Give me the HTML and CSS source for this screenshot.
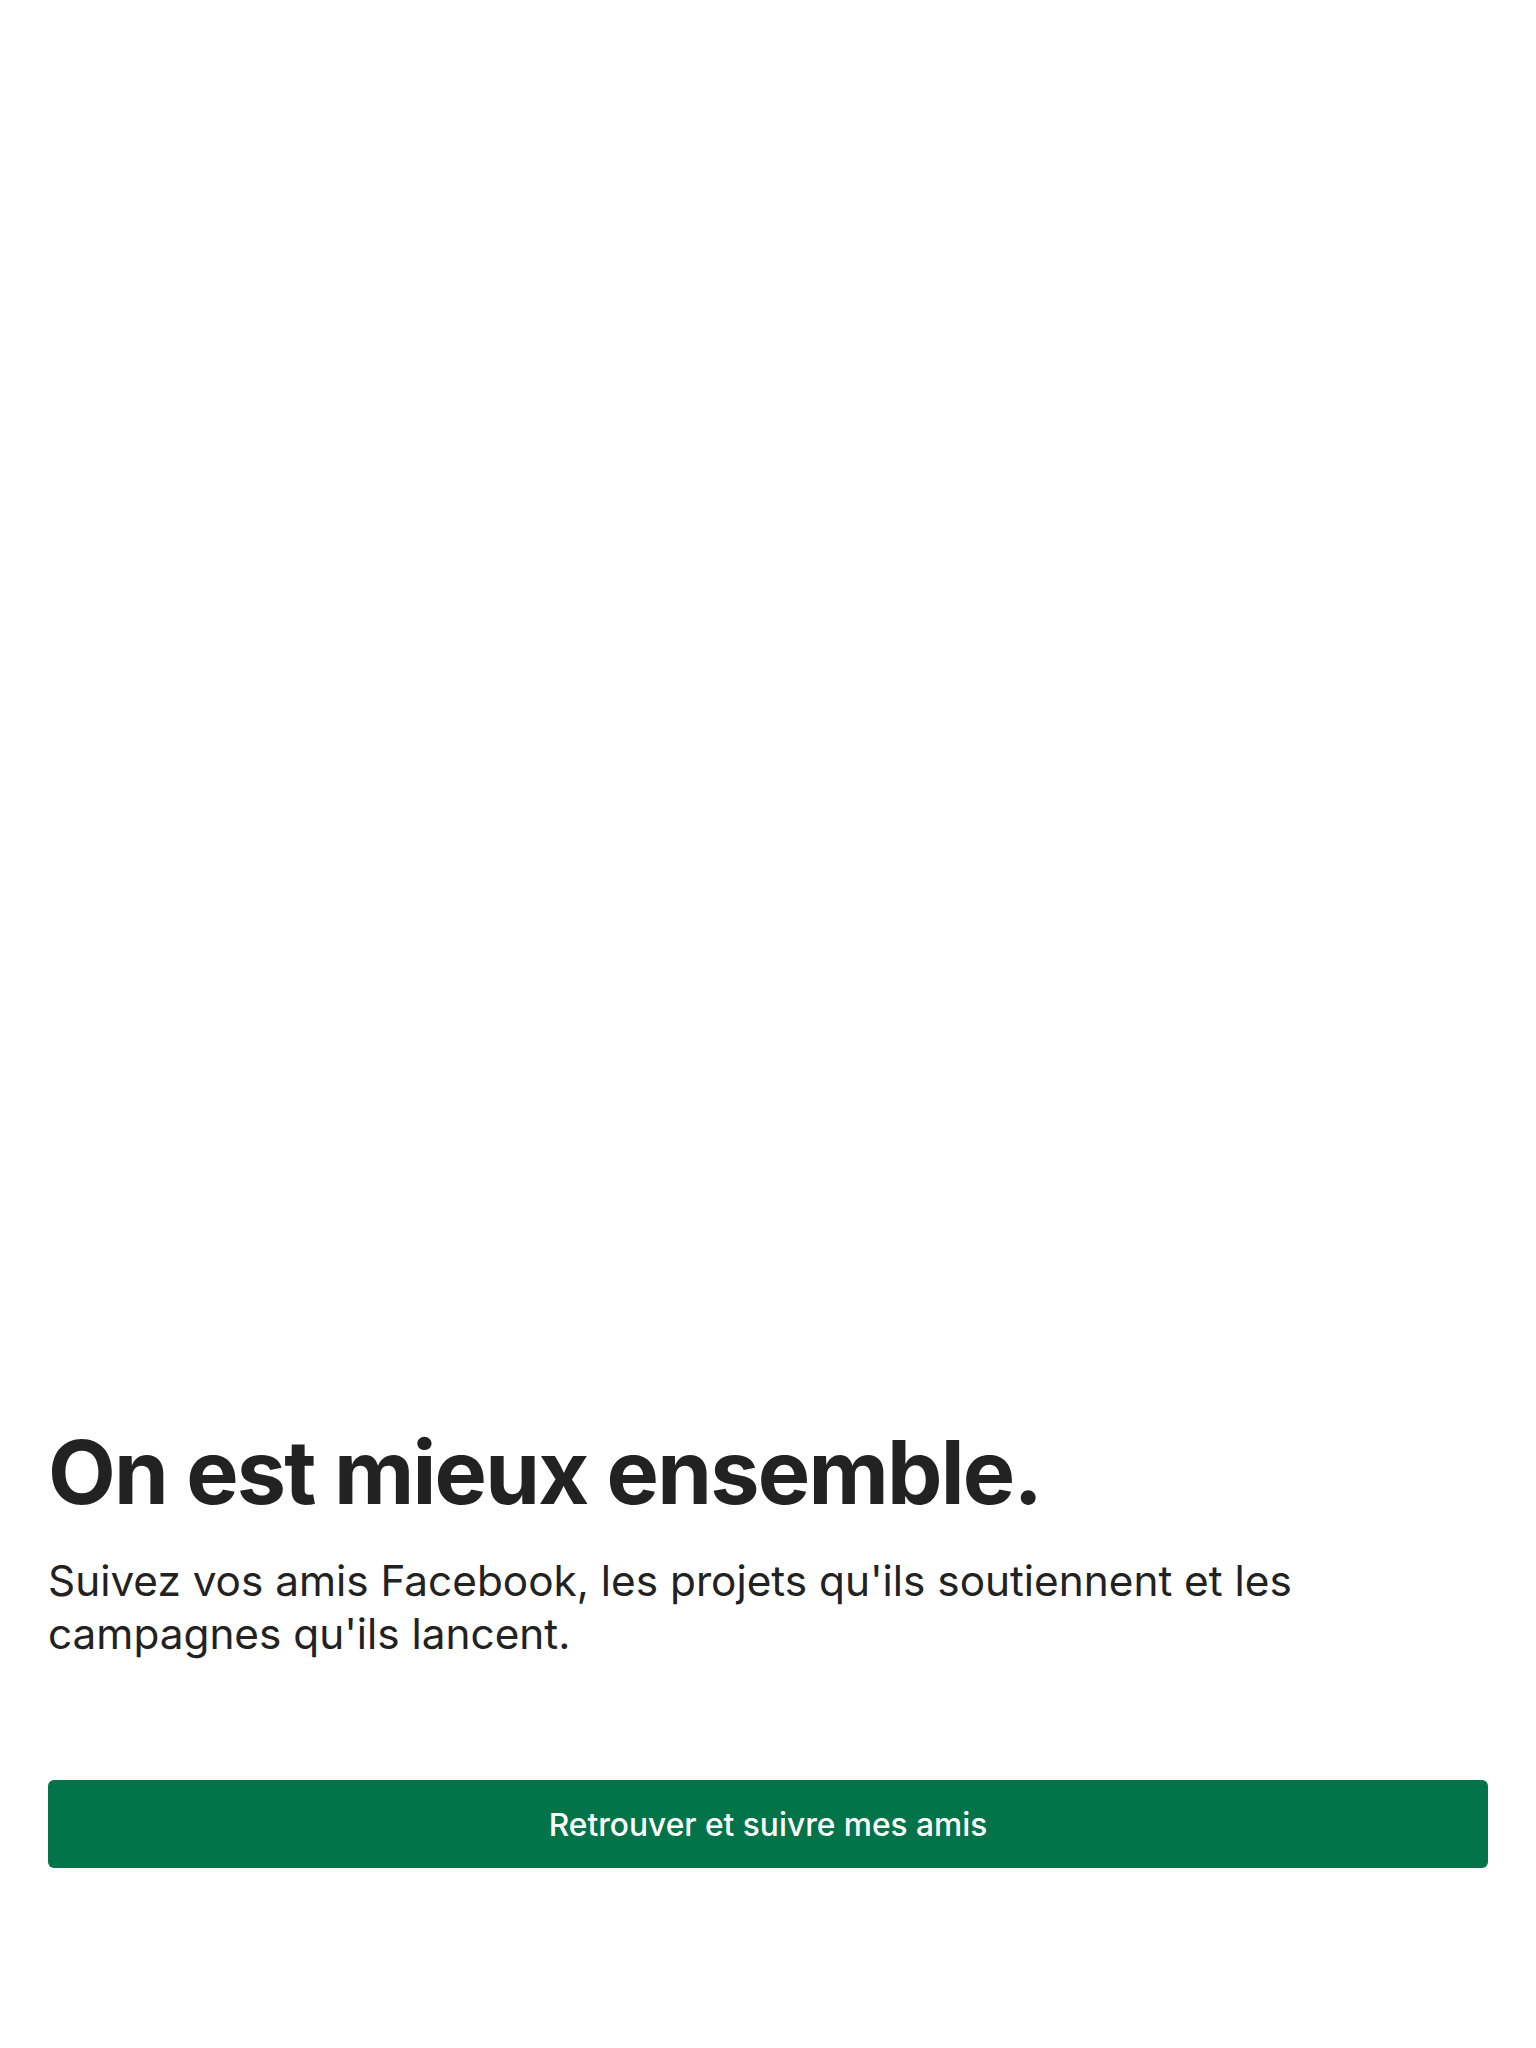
FILE: index.html
```html
<!DOCTYPE html>
<html lang="fr">
<head>
<meta charset="utf-8">
<title>On est mieux ensemble.</title>
<link rel="stylesheet" href="styles.css">
</head>
<body>
<main class="screen">
  <div class="media"></div>
  <section class="content">
    <h1 class="title">On est mieux ensemble.</h1>
    <p class="lead">Suivez vos amis Facebook, les projets qu'ils soutiennent et les campagnes qu'ils lancent.</p>
    <button class="cta" type="button">Retrouver et suivre mes amis</button>
  </section>
</main>
</body>
</html>
```

FILE: styles.css
```css
html, body {
  margin: 0;
  padding: 0;
  background: #ffffff;
}

body {
  font-family: Inter, "Noto Sans", "Liberation Sans", sans-serif;
  color: #222222;
}

.screen {
  min-height: 2048px;
  display: flex;
  flex-direction: column;
  box-sizing: border-box;
  padding: 0 48px 180px;
}

.media {
  flex: 1;
}

.content {
  display: flex;
  flex-direction: column;
}

.title {
  margin: 0;
  font-size: 88px;
  line-height: 1.2;
  font-weight: 700;
  letter-spacing: -0.02em;
  color: #222222;
}

.lead {
  margin: 28px 0 0;
  font-size: 42.3px;
  line-height: 53px;
  font-weight: 400;
  color: #222222;
}

.cta {
  margin-top: 120px;
  height: 88px;
  width: 100%;
  border: 0;
  border-radius: 6px;
  background: #037349;
  color: #ffffff;
  font-family: Inter, "Noto Sans", "Liberation Sans", sans-serif;
  font-size: 31.7px;
  font-weight: 500;
  cursor: pointer;
}
```
